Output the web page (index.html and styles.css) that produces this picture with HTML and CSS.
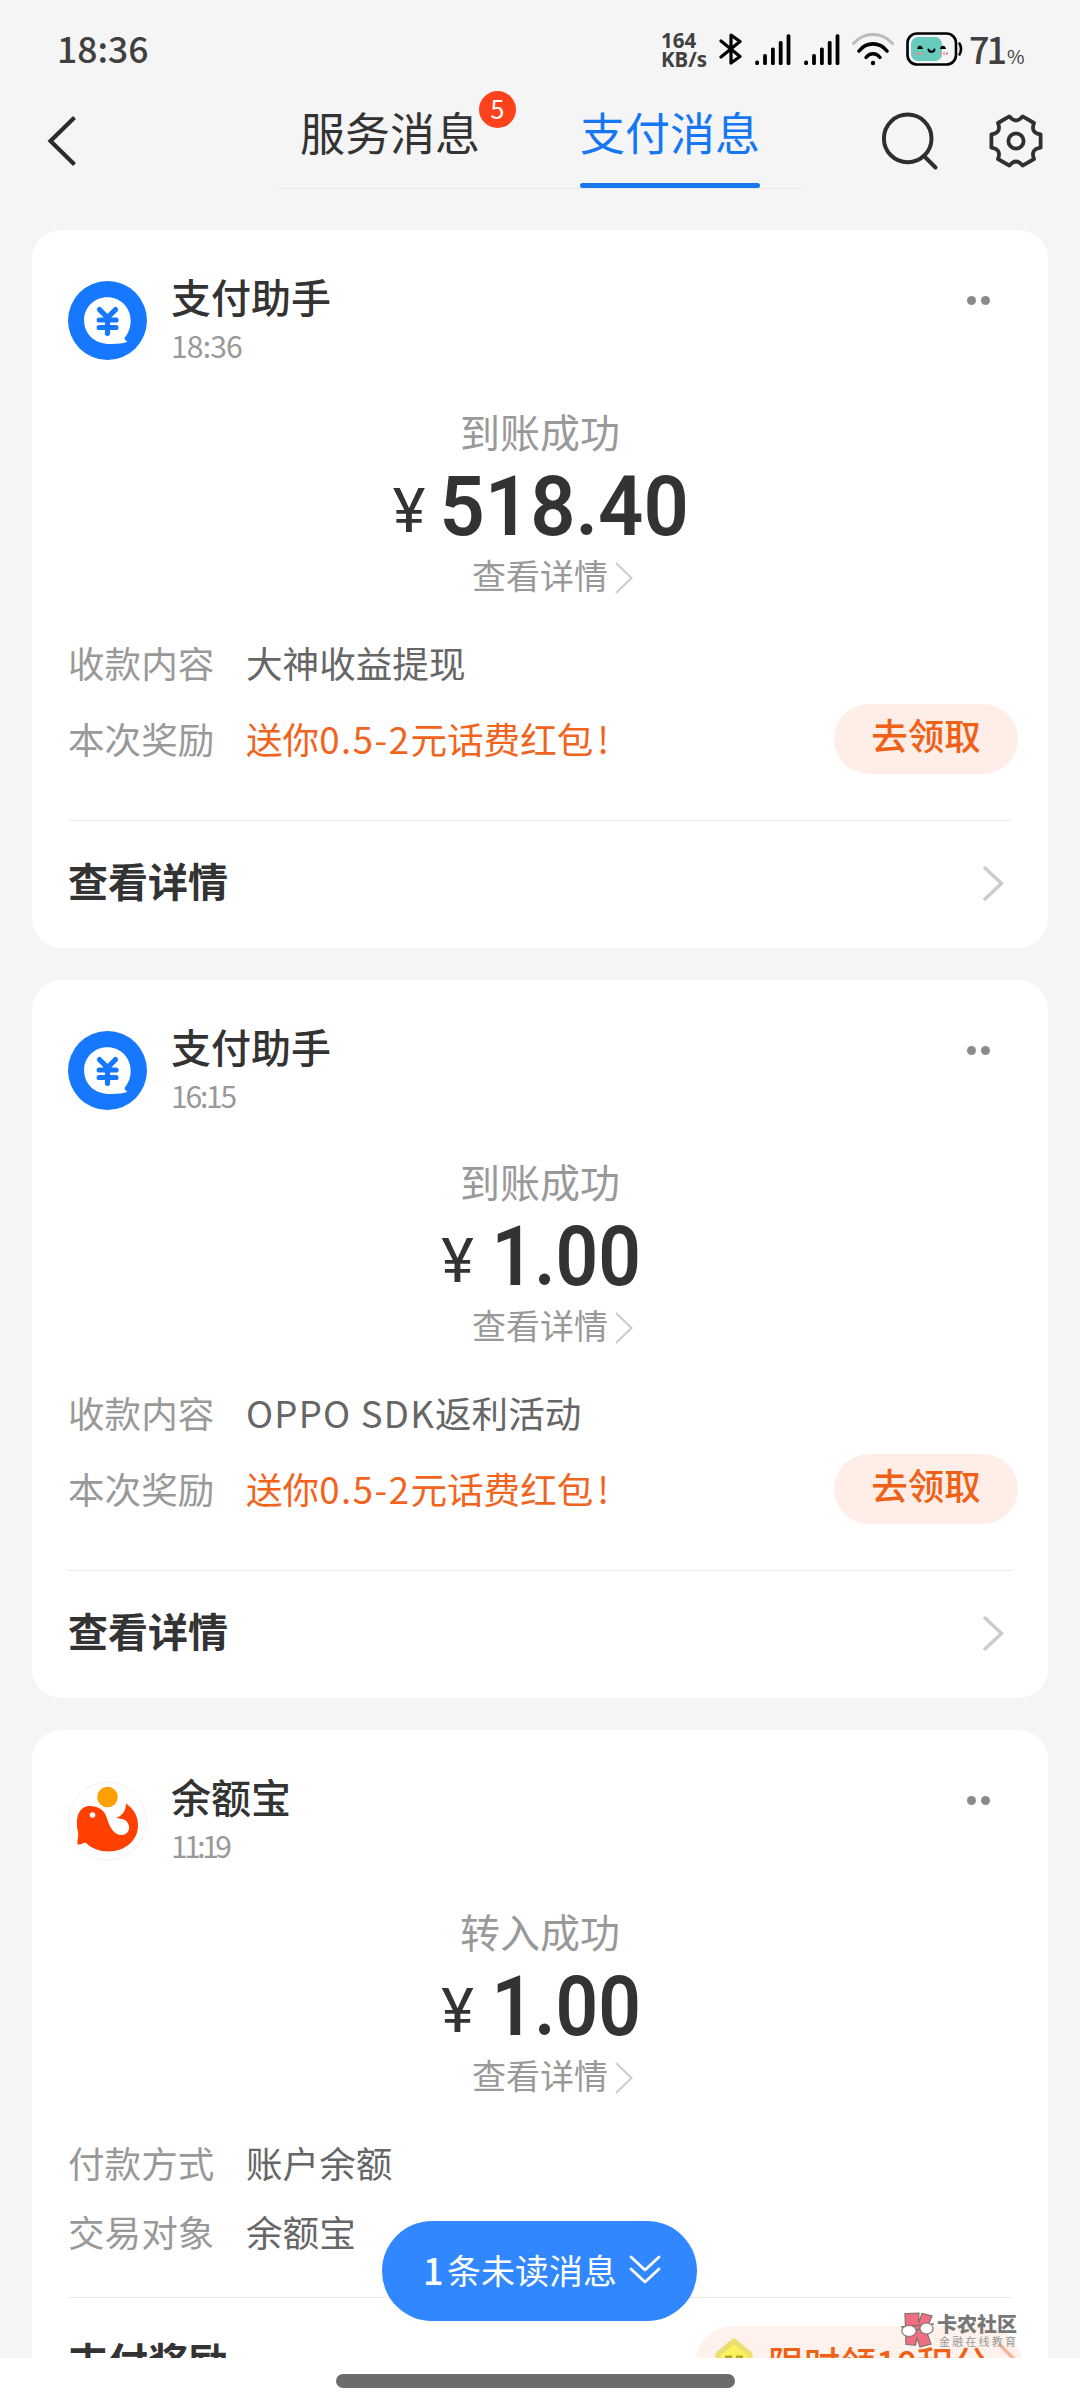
FILE: index.html
```html
<!DOCTYPE html>
<html lang="zh-CN">
<head>
<meta charset="utf-8">
<title>支付消息</title>
<link rel="stylesheet" href="styles.css">
</head>
<body>
<svg width="0" height="0" class="defs" aria-hidden="true">
  <symbol id="signal" viewBox="0 0 36 32">
    <g fill="#000"><rect x="0.2" y="26.5" width="3.8" height="4.5" rx="1.6"/><rect x="8.1" y="20" width="3.8" height="11" rx="1.6"/><rect x="16" y="13.5" width="3.8" height="17.5" rx="1.6"/><rect x="23.8" y="7" width="3.8" height="24" rx="1.6"/><rect x="31.6" y="0.2" width="3.8" height="30.8" rx="1.6"/></g>
  </symbol>
  <symbol id="avatar-pay" viewBox="0 0 79 79">
    <circle cx="39.5" cy="39.5" r="39.5" fill="#1677ff"/>
    <path d="M39.3 16.2C26 16.2 16.1 26.5 16.1 39.2C16.1 53.5 27 63 42 63C49 63 56 62.5 59.4 60.8C58 59.8 56.6 58.6 56.4 57C60.6 52.3 62.7 46 62.7 39.5C62.7 26.5 52.5 16.2 39.3 16.2Z" fill="#fff"/>
    <path d="M31.5 28.6L39.5 36.6L47.5 28.6M31.2 39H48M31.2 46.5H48M39.5 37V52.3" fill="none" stroke="#1677ff" stroke-width="5.2" stroke-linecap="round"/>
  </symbol>
  <symbol id="more-right" viewBox="0 0 22 38">
    <path d="M2 2L19.5 18.5L2 35" fill="none" stroke="#ccc" stroke-width="3.6"/>
  </symbol>
  <symbol id="thin-right" viewBox="0 0 18 32">
    <path d="M1 1L16.5 16L1 31" fill="none" stroke="#ccc" stroke-width="2"/>
  </symbol>
</svg>
<div class="screen">
  <header class="top">
    <div class="status">
      <span class="clock">18:36</span>
      <span class="speed"><span>164</span><span>KB/s</span></span>
      <svg class="bt" width="24" height="34" viewBox="0 0 24 34"><path d="M2 9L21 24.5L12 31V3L21 9.5L2 25" fill="none" stroke="#000" stroke-width="3.2" stroke-linecap="round" stroke-linejoin="round"/></svg>
      <svg class="sig" width="36" height="32"><use href="#signal"/></svg>
      <svg class="sig2" width="36" height="32"><use href="#signal"/></svg>
      <svg class="wifi" width="44" height="34" viewBox="0 0 44 34"><g fill="none" stroke-linecap="round"><path d="M2.5 11.5C13 -.5 31 -.5 41.5 11.5" stroke="#bbb" stroke-width="3"/><path d="M8 19C15.5 9.5 28.5 9.5 36 19" stroke="#000" stroke-width="3.6"/><path d="M15 25.5C19 20.5 25 20.5 29 25.5" stroke="#000" stroke-width="3.4"/></g><circle cx="22" cy="31" r="2.2"/></svg>
      <svg class="batt" width="58" height="34" viewBox="0 0 58 34"><rect x="1.5" y="1.5" width="48.5" height="31" rx="9.5" fill="#f5f5f5" stroke="#000" stroke-width="2.6"/><rect x="5" y="5" width="31" height="24" rx="7" fill="#67cbbd"/><path d="M53.5 11.5C55.5 14.5 55.5 19.5 53.5 22.5" fill="none" stroke="#000" stroke-width="2.6" stroke-linecap="round"/><path d="M11 17C11.5 12.5 16.5 12.5 17 17ZM34 17C34.5 12.5 39.5 12.5 40 17Z"/><path d="M22.5 17.5C23 20.5 28 20.5 28.5 17.5" fill="none" stroke="#000" stroke-width="2" stroke-linecap="round"/><path d="M10 20V23M13 20V23M16 20V23M35 20V23M38 20V23M41 20V23" stroke="#e78d8d" stroke-width="1.5"/></svg>
      <span class="pct">71<small>%</small></span>
    </div>
    <nav class="nav">
      <svg class="back" width="32" height="50" viewBox="0 0 32 50"><path d="M28.500 1.500L4.500 25L28.500 48.500" fill="none" stroke="#2b2b2b" stroke-width="4.200"/></svg>
      <div class="tabs">
        <div class="tab">服务消息<span class="badge">5</span></div>
        <div class="tab active">支付消息</div>
      </div>
      <svg class="search" width="58" height="60" viewBox="0 0 58 60"><g fill="none" stroke="#2e2e2e" stroke-width="4"><circle cx="26.7" cy="26.4" r="23.8"/><path d="M43 44L54.5 55.5" stroke-linecap="round"/></g></svg>
      <svg class="gear" width="56" height="56" viewBox="-28 -28 56 56"><path d="M24.6 -6.6L24.6 6.6Q14.2 8.2 18 18L6.6 24.6Q0 16.4 -6.6 24.6L-18 18Q-14.2 8.2 -24.6 6.6L-24.6 -6.6Q-14.2 -8.2 -18 -18L-6.6 -24.6Q0 -16.4 6.6 -24.6L18 -18Q14.2 -8.2 24.6 -6.6Z" fill="none" stroke="#303030" stroke-width="3.8" stroke-linejoin="round"/><circle r="7.6" fill="none" stroke="#303030" stroke-width="3.8"/></svg>
    </nav>
  </header>

  <main class="feed">
    <article class="card">
      <div class="head">
        <svg class="avatar" width="79" height="79"><use href="#avatar-pay"/></svg>
        <div class="who"><div class="name">支付助手</div><div class="time">18:36</div></div>
        <div class="dots"><i></i><i></i></div>
      </div>
      <div class="title">到账成功</div>
      <div class="money"><span class="yen">¥</span><span class="num">518.40</span></div>
      <div class="detail">查看详情<svg width="18" height="32"><use href="#thin-right"/></svg></div>
      <div class="row"><span class="key">收款内容</span><span class="val">大神收益提现</span></div>
      <div class="row reward"><span class="key">本次奖励</span><span class="val hot">送你<b>0.5-2</b>元话费红包<b class="bang">!</b></span><span class="claim">去领取</span></div>
      <div class="foot"><span class="foot-text">查看详情</span><svg class="arrow" width="22" height="38"><use href="#more-right"/></svg></div>
    </article>

    <article class="card">
      <div class="head">
        <svg class="avatar" width="79" height="79"><use href="#avatar-pay"/></svg>
        <div class="who"><div class="name">支付助手</div><div class="time tight">16:15</div></div>
        <div class="dots"><i></i><i></i></div>
      </div>
      <div class="title">到账成功</div>
      <div class="money"><span class="yen">¥</span><span class="num short">1.00</span></div>
      <div class="detail">查看详情<svg width="18" height="32"><use href="#thin-right"/></svg></div>
      <div class="row"><span class="key">收款内容</span><span class="val"><span class="latin">OPPO SDK</span>返利活动</span></div>
      <div class="row reward"><span class="key">本次奖励</span><span class="val hot">送你<b>0.5-2</b>元话费红包<b class="bang">!</b></span><span class="claim">去领取</span></div>
      <div class="foot"><span class="foot-text">查看详情</span><svg class="arrow" width="22" height="38"><use href="#more-right"/></svg></div>
    </article>

    <article class="card last">
      <div class="head">
        <svg class="avatar" width="79" height="80" viewBox="0 0 79 80"><circle cx="39.5" cy="40" r="39" fill="#fff" stroke="#f3f3f3"/><circle cx="39.5" cy="16" r="10.3" fill="#ff9f00"/><path d="M21 25C31 25 36 29 38.5 36C42 47 46 54 54 54C59.5 54 62.5 48 60.5 43.5C58.500 38 54 38 48 37C52 35.5 58 32 58 22.5C66 28 70 35 70 45C70 59 57 70.5 41 70.5C31 70.5 24 67.5 18 62C15 61 14 64 9.8 63.5C8.5 60 11 55 10 51C7.5 40 9 26 21 25Z" fill="#ff4000"/><circle cx="24.5" cy="34" r="2.8" fill="#fff"/></svg>
        <div class="who"><div class="name">余额宝</div><div class="time tighter">11:19</div></div>
        <div class="dots"><i></i><i></i></div>
      </div>
      <div class="title">转入成功</div>
      <div class="money"><span class="yen">¥</span><span class="num short">1.00</span></div>
      <div class="detail">查看详情<svg width="18" height="32"><use href="#thin-right"/></svg></div>
      <div class="row"><span class="key">付款方式</span><span class="val">账户余额</span></div>
      <div class="row"><span class="key">交易对象</span><span class="val">余额宝</span></div>
      <div class="foot"><span class="foot-text">支付奖励</span>
        <span class="points"><svg width="40" height="44" viewBox="0 0 40 44"><path d="M20 4L36 17V38H4V17Z" fill="#fbf35c" stroke="#ecdf72" stroke-width="5" stroke-linejoin="round"/><path d="M11 20H18M22 20H29" stroke="#b9a62c" stroke-width="3"/></svg><span>限时领10积分</span><svg class="points-arrow" width="20" height="36" viewBox="0 0 20 36"><path d="M2 2L18 18L2 34" fill="none" stroke="#f3b79a" stroke-width="3.5"/></svg></span>
      </div>
    </article>
  </main>
  <div class="homebar"><i></i></div>

  <div class="unread"><b>1</b><span>条未读消息</span><svg width="32" height="30" viewBox="0 0 32 30"><path d="M2 2L16 15L30 2M2 14L16 27L30 14" fill="none" stroke="#fff" stroke-width="2.8" stroke-linecap="round" stroke-linejoin="round"/></svg></div>
  <div class="mark">
    <svg width="35" height="36" viewBox="0 0 35 36"><path d="M5 1.5L19 1L18.5 11L22 1.5L32 4L26 18L31 32L20 35L17 26L15.5 33L6 32.5Z" fill="#ee6f80" stroke="#857070" stroke-width="1.2"/><path d="M1 15L34 12M16.5 18L20 17" stroke="#857070" stroke-width="1.5"/><ellipse cx="9" cy="19" rx="7.2" ry="5.5" fill="#fff" stroke="#857070" stroke-width="1.2"/><ellipse cx="26.5" cy="16.5" rx="6.6" ry="5.5" fill="#fff" stroke="#857070" stroke-width="1.2"/></svg>
    <div class="mark-text"><strong>卡农社区</strong><span>金融在线教育</span></div>
  </div>
</div>
</body>
</html>
```
FILE: styles.css
```css
* { box-sizing: border-box; }
body {
  margin: 0;
  background: #fff;
  font-family: "Noto Sans CJK SC", "Noto Sans", sans-serif;
  color: #333;
}
svg { display: block; flex: none; }
.defs { position: absolute; }
.screen {
  position: relative;
  display: flex;
  flex-direction: column;
  width: 1080px;
  height: 2400px;
  overflow: hidden;
  background: #f5f5f5;
  white-space: nowrap;
}
.top { flex: none; height: 230px; }

/* status bar */
.status { display: flex; align-items: flex-start; height: 90px; padding: 32px 0 0 57px; }
.clock { width: 604px; font-size: 35.5px; line-height: 32px; font-weight: 500; color: #404040; }
.speed {
  display: flex;
  flex-direction: column;
  width: 58px;
  margin-top: -1px;
  font: 700 20.5px/19px "Noto Sans", sans-serif;
  color: #404040;
}
.bt { margin-right: 12px; }
.sig, .sig2 { margin-top: 2px; margin-right: 13px; }
.sig2 { margin-right: 11px; }
.wifi { margin-right: 11px; }
.batt { margin-right: 5px; }
.pct { font-size: 36px; line-height: 32px; font-weight: 500; color: #404040; letter-spacing: -3px; }
.pct small { font-size: 19px; font-weight: 400; margin-left: 3px; }

/* navigation */
.nav { display: flex; align-items: flex-start; height: 110px; padding-left: 46px; }
.back { margin-top: 26px; }
.tabs {
  display: flex;
  gap: 100px;
  width: 530px;
  height: 99px;
  margin-left: 197px;
  padding-left: 25px;
  border-bottom: 1px solid #ebebeb;
}
.tab {
  position: relative;
  width: 180px;
  height: 99px;
  text-align: center;
  font-size: 45px;
  line-height: 83px;
}
.tab.active { color: #1677f4; }
.tab.active::after {
  content: "";
  display: block;
  height: 5px;
  margin-top: 10px;
  border-radius: 3px;
  background: #1777ee;
}
.badge {
  position: absolute;
  left: 179px;
  top: 1px;
  width: 37px;
  height: 37px;
  border-radius: 50%;
  background: #ff411c;
  color: #fff;
  font-size: 25px;
  line-height: 34px;
}
.search { margin: 22px 0 0 76px; }
.gear { margin: 23px 0 0 49px; }

/* message cards */
.feed { flex: 1; min-height: 0; overflow: hidden; padding: 0 32px; }
.card {
  height: 718px;
  margin-bottom: 32px;
  padding: 0 36px;
  border-radius: 30px;
  background: #fff;
}
.head { display: flex; height: 133px; }
.avatar { margin-top: 51px; }
.who { flex: 1; padding: 42px 0 0 24px; }
.name { font-size: 40px; line-height: 48px; font-weight: 500; }
.time { margin-top: 7px; font-size: 30px; line-height: 36px; color: #999; letter-spacing: -.8px; }
.time.tight { letter-spacing: -2.2px; }
.time.tighter { letter-spacing: -3.5px; }
.dots { display: flex; gap: 5px; margin: 66px 22px 0 0; }
.dots i { width: 9px; height: 9px; border-radius: 50%; background: #8a8a8a; }
.title {
  margin-top: 44px;
  text-align: center;
  font-size: 40px;
  line-height: 48px;
  color: #999;
}
.money {
  display: flex;
  align-items: baseline;
  justify-content: center;
  gap: 15px;
  height: 97px;
  padding-left: 2px;
  line-height: 103px;
  font-family: Roboto, sans-serif;
}
.yen { position: relative; top: -3px; font-size: 62px; font-weight: 400; }
.num {
  margin-left: -15px;
  font-size: 84px;
  font-weight: 600;
  transform: scaleX(.945);
  transform-origin: right;
}
.num.short { margin-left: -16px; transform: scaleX(.89); }
.detail {
  display: flex;
  align-items: center;
  justify-content: center;
  gap: 7px;
  height: 46px;
  padding-left: 25px;
  font-size: 34px;
  line-height: 46px;
  color: #999;
}
.detail svg { margin-top: 5px; }
.row { display: flex; height: 50px; margin-top: 19px; font-size: 36.6px; line-height: 52px; color: #666; }
.detail + .row { margin-top: 39px; }
.key { width: 178px; color: #999; }
.val { flex: 1; }
.latin { letter-spacing: 1.2px; }
.reward { height: 70px; margin-top: 17px; line-height: 69px; }
.hot { color: #f1641e; }
.hot b { font-weight: 400; letter-spacing: 1.5px; }
.hot .bang { margin-left: 4px; }
.claim {
  width: 184px;
  height: 70px;
  margin-right: -6px;
  border-radius: 35px;
  background: #ffeee8;
  color: #ee6117;
  text-align: center;
  line-height: 62px;
  font-weight: 500;
}
.foot {
  display: flex;
  justify-content: space-between;
  margin-top: 46px;
  border-top: 1px solid #ebebeb;
  font-size: 40px;
  line-height: 118px;
  font-weight: 600;
}
.arrow { margin: 44px 8px 0 0; }
.last { height: 800px; }
.last .foot { margin-top: 41px; line-height: 124px; }
.points {
  display: flex;
  width: 327px;
  height: 76px;
  margin: 28px -10px 0 0;
  padding: 11px 0 0 19px;
  border-radius: 38px;
  background: #fff1eb;
  color: #ee6117;
  font-size: 36px;
  line-height: 50px;
  font-weight: 500;
}
.points span { margin-left: 14px; }
.points-arrow { margin: 5px 0 0 8px; }

.homebar { flex: none; height: 42px; padding: 16px 345px 0 336px; background: #fff; }
.homebar i { display: block; height: 14px; border-radius: 7px; background: #6b6b6b; }

/* floating layers */
.unread {
  position: absolute;
  left: 382px;
  top: 2221px;
  display: flex;
  width: 315px;
  height: 100px;
  padding-left: 41px;
  border-radius: 50px;
  background: #3187ff;
  color: #fff;
  font-size: 34px;
  line-height: 97px;
}
.unread b { width: 24px; font-size: 36px; font-weight: 500; }
.unread svg { margin: 34px 0 0 12px; }
.mark { position: absolute; left: 900px; top: 2312px; display: flex; }
.mark-text { display: flex; flex-direction: column; margin-left: 2px; color: #777; }
.mark-text strong { font-size: 20px; line-height: 23px; font-weight: 900; }
.mark-text span { margin-left: 2px; font-size: 11px; line-height: 12px; letter-spacing: 2.2px; color: #999; }
```
